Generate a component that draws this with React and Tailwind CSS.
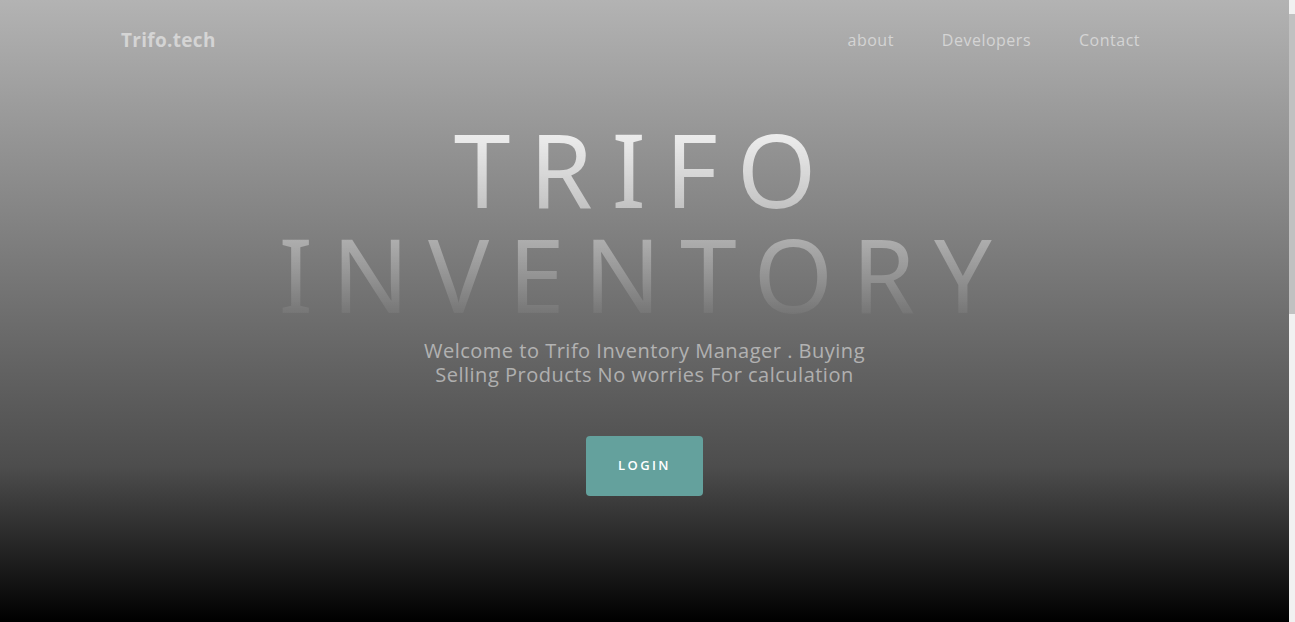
export default function App() {
  return (
    <div className="flex h-[622px] w-full overflow-hidden">
      <header className="flex h-full flex-1 flex-col bg-[linear-gradient(to_bottom,#b3b3b3_0%,#4d4d4d_75%,#000_100%)] font-['Open_Sans',sans-serif]">
        <nav className="flex h-[80px] w-full items-center justify-between pl-[121px] pr-[149px]">
          <a className="text-[19px] font-bold tracking-[0.3px] text-white/50">Trifo.tech</a>
          <ul className="flex">
            <li><a className="px-6 text-[16px] tracking-[0.5px] text-white/50">about</a></li>
            <li><a className="px-6 text-[16px] tracking-[0.5px] text-white/50">Developers</a></li>
            <li><a className="pl-6 text-[16px] tracking-[0.5px] text-white/50">Contact</a></li>
          </ul>
        </nav>

        <div className="mt-[36px] flex flex-col items-center text-center">
          <h1 className="w-[900px] bg-[linear-gradient(rgba(255,255,255,0.9),rgba(255,255,255,0))] bg-clip-text font-['Noto_Sans',sans-serif] text-[102px] leading-[105px] tracking-[18.8px] text-transparent uppercase">
            Trifo Inventory
          </h1>
          <h2 className="mt-[13px] max-w-[470px] text-[20px] leading-[24px] tracking-[0.5px] text-white/50">
            Welcome to Trifo Inventory Manager . Buying Selling Products No worries For calculation
          </h2>
          <a className="mt-[49px] rounded bg-[#64a19d] px-8 py-5 text-[13px] font-semibold tracking-[2.4px] text-white uppercase">
            Login
          </a>
        </div>
      </header>
      <div className="flex h-full w-[6px] flex-col bg-[#f1f1f1]">
        <div className="mt-[14px] h-[300px] w-full bg-[#c1c1c1]" />
      </div>
    </div>
  );
}
